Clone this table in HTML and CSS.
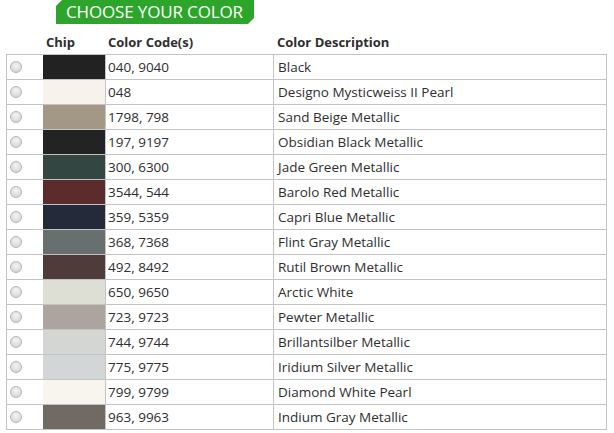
FILE: index.html
```html
<!DOCTYPE html>
<html>
<head>
<meta charset="utf-8">
<link rel="stylesheet" href="styles.css">
</head>
<body>
<div class="page">
  <div class="tab">CHOOSE YOUR COLOR</div>
  <div class="colors">
    <div class="row head"><div></div><div class="c-chip-h">Chip</div><div class="c-code">Color Code(s)</div><div class="c-desc">Color Description</div></div>
    <div class="row"><div class="c-radio"><span class="radio"></span></div><div class="chip" style="background:#222222"></div><div class="c-code">040, 9040</div><div class="c-desc">Black</div></div>
    <div class="row"><div class="c-radio"><span class="radio"></span></div><div class="chip" style="background:#f7f3ec"></div><div class="c-code">048</div><div class="c-desc">Designo Mysticweiss II Pearl</div></div>
    <div class="row"><div class="c-radio"><span class="radio"></span></div><div class="chip" style="background:#a39886"></div><div class="c-code">1798, 798</div><div class="c-desc">Sand Beige Metallic</div></div>
    <div class="row"><div class="c-radio"><span class="radio"></span></div><div class="chip" style="background:#232323"></div><div class="c-code">197, 9197</div><div class="c-desc">Obsidian Black Metallic</div></div>
    <div class="row"><div class="c-radio"><span class="radio"></span></div><div class="chip" style="background:#344641"></div><div class="c-code">300, 6300</div><div class="c-desc">Jade Green Metallic</div></div>
    <div class="row"><div class="c-radio"><span class="radio"></span></div><div class="chip" style="background:#5c2b2c"></div><div class="c-code">3544, 544</div><div class="c-desc">Barolo Red Metallic</div></div>
    <div class="row"><div class="c-radio"><span class="radio"></span></div><div class="chip" style="background:#242a3a"></div><div class="c-code">359, 5359</div><div class="c-desc">Capri Blue Metallic</div></div>
    <div class="row"><div class="c-radio"><span class="radio"></span></div><div class="chip" style="background:#686f6f"></div><div class="c-code">368, 7368</div><div class="c-desc">Flint Gray Metallic</div></div>
    <div class="row"><div class="c-radio"><span class="radio"></span></div><div class="chip" style="background:#4f3c3a"></div><div class="c-code">492, 8492</div><div class="c-desc">Rutil Brown Metallic</div></div>
    <div class="row"><div class="c-radio"><span class="radio"></span></div><div class="chip" style="background:#dddfd5"></div><div class="c-code">650, 9650</div><div class="c-desc">Arctic White</div></div>
    <div class="row"><div class="c-radio"><span class="radio"></span></div><div class="chip" style="background:#aca59f"></div><div class="c-code">723, 9723</div><div class="c-desc">Pewter Metallic</div></div>
    <div class="row"><div class="c-radio"><span class="radio"></span></div><div class="chip" style="background:#d3d6d3"></div><div class="c-code">744, 9744</div><div class="c-desc">Brillantsilber Metallic</div></div>
    <div class="row"><div class="c-radio"><span class="radio"></span></div><div class="chip" style="background:#d2d6d6"></div><div class="c-code">775, 9775</div><div class="c-desc">Iridium Silver Metallic</div></div>
    <div class="row"><div class="c-radio"><span class="radio"></span></div><div class="chip" style="background:#f8f5ee"></div><div class="c-code">799, 9799</div><div class="c-desc">Diamond White Pearl</div></div>
    <div class="row"><div class="c-radio"><span class="radio"></span></div><div class="chip" style="background:#716a62"></div><div class="c-code">963, 9963</div><div class="c-desc">Indium Gray Metallic</div></div>
  </div>
</div>
</body>
</html>
```
FILE: styles.css
```css
html, body {
  margin: 0;
  padding: 0;
  background: #ffffff;
}
body {
  font-family: "Open Sans", "DejaVu Sans", sans-serif;
  color: #2e2e2e;
}
.page {
  padding: 0 0 0 6px;
}
.tab {
  margin-left: 50px;
  width: 198px;
  height: 24px;
  box-sizing: border-box;
  padding-left: 10px;
  background: #2ca52a;
  color: #ffffff;
  font-size: 17px;
  letter-spacing: -0.15px;
  line-height: 24px;
  white-space: nowrap;
  clip-path: polygon(6px 0, 100% 0, 100% calc(100% - 6px), calc(100% - 6px) 100%, 0 100%, 0 6px);
}
.colors {
  width: 601px;
  font-size: 13.5px;
}
.row {
  display: grid;
  grid-template-columns: 36px 62px 168px 1fr;
  height: 25px;
  box-sizing: border-box;
  border-left: 1px solid #c3c3c3;
  border-right: 1px solid #c3c3c3;
  border-bottom: 1px solid #c3c3c3;
  align-items: stretch;
}
.row.head {
  height: 31px;
  border: none;
  border-bottom: 1px solid #c3c3c3;
  font-weight: bold;
  font-size: 13px;
  padding-left: 1px;
}
.row > div {
  display: flex;
  align-items: center;
  white-space: nowrap;
}
.row.head > div {
  padding-top: 5px;
}
.row .c-code {
  border-left: 1px solid #c3c3c3;
  padding-left: 2px;
}
.row .c-desc {
  border-left: 1px solid #c3c3c3;
  padding-left: 4px;
}
.row.head .c-code {
  border-left-color: transparent;
}
.row.head .c-desc {
  border-left-color: transparent;
  padding-left: 3px;
}
.row .c-chip-h {
  padding-left: 3px;
}
.radio {
  display: block;
  width: 12px;
  height: 12px;
  margin-left: 3px;
  margin-top: -1px;
  border-radius: 50%;
  box-sizing: border-box;
  border: 1px solid #b5b5b5;
  background: radial-gradient(circle at 50% 35%, #f4f4f4 0%, #dedede 60%, #cfcfcf 100%);
}
```
